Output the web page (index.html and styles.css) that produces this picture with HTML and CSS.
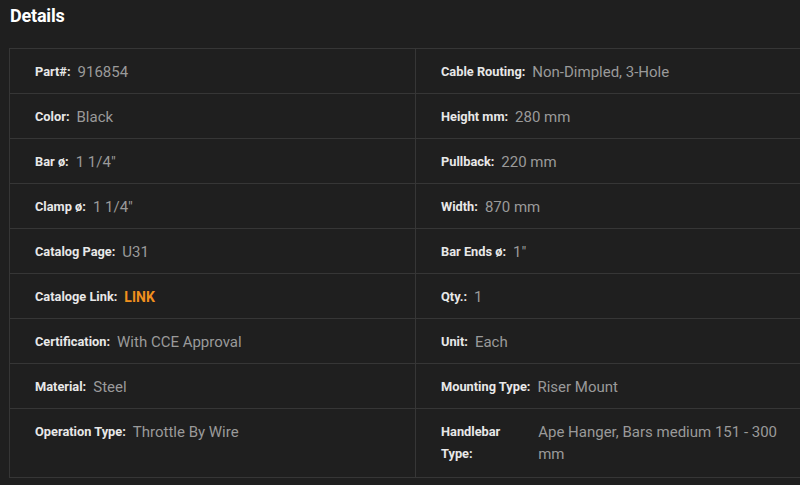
FILE: index.html
```html
<!DOCTYPE html>
<html>
<head>
<meta charset="utf-8">
<link rel="stylesheet" href="styles.css">
</head>
<body>
<div class="page">
  <h2 class="title">Details</h2>
  <div class="specs">
    <div class="cell"><span class="lbl">Part#:</span><span class="val">916854</span></div>
    <div class="cell"><span class="lbl">Cable Routing:</span><span class="val">Non-Dimpled, 3-Hole</span></div>
    <div class="cell"><span class="lbl">Color:</span><span class="val">Black</span></div>
    <div class="cell"><span class="lbl">Height mm:</span><span class="val">280 mm</span></div>
    <div class="cell"><span class="lbl">Bar ø:</span><span class="val">1 1/4"</span></div>
    <div class="cell"><span class="lbl">Pullback:</span><span class="val">220 mm</span></div>
    <div class="cell"><span class="lbl">Clamp ø:</span><span class="val">1 1/4"</span></div>
    <div class="cell"><span class="lbl">Width:</span><span class="val">870 mm</span></div>
    <div class="cell"><span class="lbl">Catalog Page:</span><span class="val">U31</span></div>
    <div class="cell"><span class="lbl">Bar Ends ø:</span><span class="val">1"</span></div>
    <div class="cell"><span class="lbl">Cataloge Link:</span><span class="val"><a class="link" href="#">LINK</a></span></div>
    <div class="cell"><span class="lbl">Qty.:</span><span class="val">1</span></div>
    <div class="cell"><span class="lbl">Certification:</span><span class="val">With CCE Approval</span></div>
    <div class="cell"><span class="lbl">Unit:</span><span class="val">Each</span></div>
    <div class="cell"><span class="lbl">Material:</span><span class="val">Steel</span></div>
    <div class="cell"><span class="lbl">Mounting Type:</span><span class="val">Riser Mount</span></div>
    <div class="cell"><span class="lbl">Operation Type:</span><span class="val">Throttle By Wire</span></div>
    <div class="cell"><span class="lbl">Handlebar Type:</span><span class="val">Ape Hanger, Bars medium 151 - 300 mm</span></div>
  </div>
</div>
</body>
</html>
```

FILE: styles.css
```css
html, body {
  margin: 0;
  padding: 0;
  background: #1f1f1f;
  overflow: hidden;
}
body {
  font-family: Roboto, "Liberation Sans", sans-serif;
  width: 800px;
  height: 485px;
}
.page {
  padding: 0 0 0 9px;
}
.title {
  margin: 0;
  padding: 5px 0 0 1px;
  height: 48px;
  box-sizing: border-box;
  font-size: 18px;
  line-height: 22px;
  font-weight: 700;
  color: #ffffff;
  letter-spacing: -0.2px;
}
.specs {
  display: grid;
  grid-template-columns: 406px 406px;
  width: 812px;
  border-top: 1px solid #363636;
  border-left: 1px solid #363636;
}
.cell {
  display: flex;
  align-items: flex-start;
  gap: 7px;
  padding: 12px 25px 10px 25px;
  border-bottom: 1px solid #363636;
  line-height: 22px;
  min-width: 0;
}
.cell:nth-child(odd) {
  border-right: 1px solid #363636;
}
.cell:nth-last-child(-n+2) {
  padding-bottom: 12px;
}
.lbl {
  flex: 0 1 auto;
  font-size: 12.8px;
  font-weight: 700;
  color: #e8e8e8;
  line-height: 22px;
}
.val {
  flex: 0 1 auto;
  font-size: 15px;
  color: #9a9a9a;
  line-height: 22px;
}
.link {
  color: #f0901e;
  font-weight: 700;
  font-size: 14px;
  text-decoration: none;
}
```
